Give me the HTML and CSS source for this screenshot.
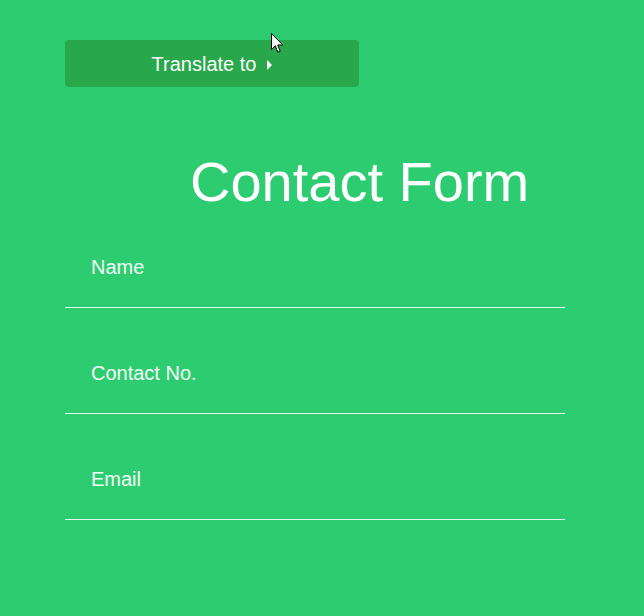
FILE: index.html
```html
<!DOCTYPE html>
<html lang="en">
<head>
<meta charset="utf-8">
<title>Contact Form</title>
<link rel="stylesheet" href="styles.css">
</head>
<body>
<div class="page">
  <div class="toolbar">
    <button class="translate" type="button">Translate to <span class="caret"></span></button>
  </div>
  <h1 class="title">Contact Form</h1>
  <form class="form">
    <input class="field" type="text" placeholder="Name">
    <input class="field" type="text" placeholder="Contact No.">
    <input class="field" type="text" placeholder="Email">
  </form>
  <svg class="cursor" width="13" height="21" viewBox="0 0 13 21">
    <path d="M0.5 0.5 L0.5 16.5 L4.3 12.8 L6.8 19.2 L9.2 18.2 L6.7 12 L11.8 12 Z" fill="#fff" stroke="#000" stroke-width="1"/>
  </svg>
</div>
</body>
</html>
```

FILE: styles.css
```css
html, body {
  margin: 0;
  padding: 0;
}
body {
  background: #2ecc71;
  font-family: "Liberation Sans", Arial, sans-serif;
  color: #fff;
}
.page {
  position: relative;
  padding: 40px 0 0 65px;
  height: 576px;
}
.toolbar {
  display: flex;
}
.translate {
  width: 294px;
  height: 47px;
  border: none;
  border-radius: 4px;
  background: #28a84a;
  color: #fff;
  font-family: inherit;
  font-size: 20px;
  line-height: 46px;
  padding: 0;
  display: flex;
  align-items: center;
  justify-content: center;
  gap: 11px;
  cursor: pointer;
}
.caret {
  width: 0;
  height: 0;
  border-left: 5px solid #fff;
  border-top: 5px solid transparent;
  border-bottom: 5px solid transparent;
  margin-top: 2px;
}
.title {
  margin: 75px 0 0 0;
  padding-left: 125px;
  font-size: 56px;
  font-weight: normal;
  line-height: 40px;
  height: 40px;
}
.form {
  display: flex;
  flex-direction: column;
  width: 500px;
}
.field {
  display: block;
  box-sizing: content-box;
  width: 474px;
  height: 24px;
  padding: 53px 0 28px 26px;
  margin: 0;
  border: none;
  border-bottom: 1px solid rgba(255, 255, 255, 0.85);
  background: transparent;
  font-family: inherit;
  font-size: 20px;
  line-height: 24px;
  color: #fff;
  outline: none;
}
.field::placeholder {
  color: #f2fff6;
  opacity: 1;
}
.cursor {
  position: absolute;
  left: 271px;
  top: 33px;
}
```
